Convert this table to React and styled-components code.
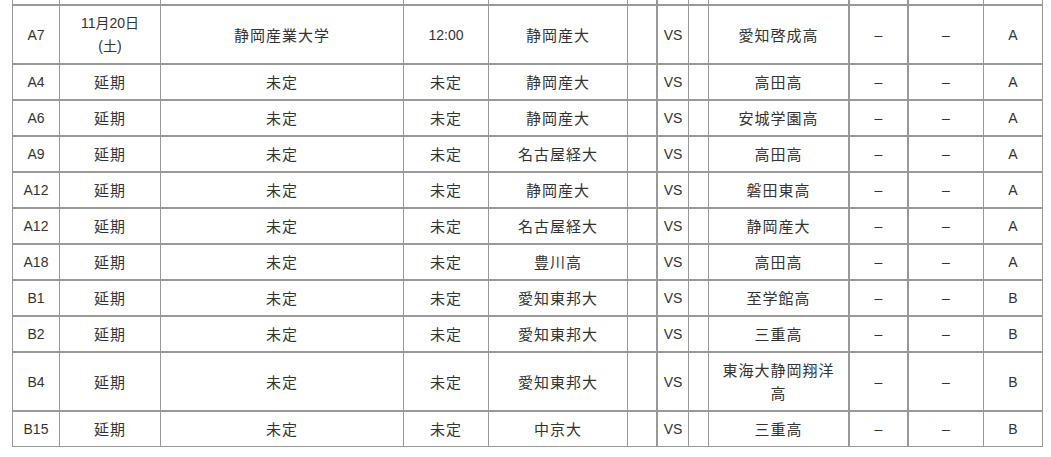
import React from "react";
import styled, { createGlobalStyle } from "styled-components";

const GlobalStyle = createGlobalStyle`
  html, body {
    margin: 0;
    padding: 0;
    background: #fff;
    overflow: hidden;
  }
  body {
    font-family: "Liberation Sans", "Noto Sans CJK JP", sans-serif;
    color: #333;
  }
`;

// column widths measured border to border
const cols = [47, 101, 243, 85, 139, 29, 32, 20, 140, 59, 76, 59];
// columns whose left rule is drawn heavier
const heavyLeft = [6, 9, 10];

const matches = [
  { id: "A7", date: ["11月20日", "(土)"], venue: "静岡産業大学", time: "12:00", home: "静岡産大", away: "愛知啓成高", group: "A" },
  { id: "A4", date: "延期", venue: "未定", time: "未定", home: "静岡産大", away: "高田高", group: "A" },
  { id: "A6", date: "延期", venue: "未定", time: "未定", home: "静岡産大", away: "安城学園高", group: "A" },
  { id: "A9", date: "延期", venue: "未定", time: "未定", home: "名古屋経大", away: "高田高", group: "A" },
  { id: "A12", date: "延期", venue: "未定", time: "未定", home: "静岡産大", away: "磐田東高", group: "A" },
  { id: "A12", date: "延期", venue: "未定", time: "未定", home: "名古屋経大", away: "静岡産大", group: "A" },
  { id: "A18", date: "延期", venue: "未定", time: "未定", home: "豊川高", away: "高田高", group: "A" },
  { id: "B1", date: "延期", venue: "未定", time: "未定", home: "愛知東邦大", away: "至学館高", group: "B" },
  { id: "B2", date: "延期", venue: "未定", time: "未定", home: "愛知東邦大", away: "三重高", group: "B" },
  { id: "B4", date: "延期", venue: "未定", time: "未定", home: "愛知東邦大", away: "東海大静岡翔洋高", group: "B" },
  { id: "B15", date: "延期", venue: "未定", time: "未定", home: "中京大", away: "三重高", group: "B" },
];

const Wrapper = styled.div`
  padding: 0 9px 0 12px;
  margin-top: -32px;
`;

const Table = styled.table`
  width: 1030px;
  table-layout: fixed;
  border-collapse: separate;
  border-spacing: 0;
  border-right: 1px solid #999;
  border-bottom: 1px solid #999;
`;

const Cell = styled.td`
  border-top: 2px solid #999;
  border-left: ${(p) => (p.$heavy ? 2 : 1)}px solid #999;
  padding: 6px ${(p) => (p.$wide ? 8 : 1)}px 5px;
  text-align: center;
  vertical-align: middle;
  line-height: 23px;
  font-size: ${(p) => (p.$jp ? 15 : 14)}px;
  letter-spacing: ${(p) => (p.$jp ? 1 : 0)}px;
  word-break: break-all;
`;

const Line = styled.span`
  display: block;
`;

const App = () => {
  return (
    <>
      <GlobalStyle />
      <Wrapper>
        <Table>
          <colgroup>
            {cols.map((w, i) => (
              <col key={i} style={{ width: w }} />
            ))}
          </colgroup>
          <tbody>
            {/* tail of the row scrolled off above */}
            <tr>
              {cols.map((w, j) => (
                <Cell key={j} $heavy={heavyLeft.includes(j)}>
                  {"\u00a0"}
                </Cell>
              ))}
            </tr>
            {matches.map((m, i) => {
              const cells = [
                { v: m.id },
                { v: m.date, jp: !Array.isArray(m.date) },
                { v: m.venue, jp: true },
                { v: m.time, jp: m.time !== "12:00" },
                { v: m.home, jp: true },
                { v: "" },
                { v: "VS" },
                { v: "" },
                { v: m.away, jp: true, wide: true },
                { v: "–" },
                { v: "–" },
                { v: m.group },
              ];
              return (
                <tr key={i}>
                  {cells.map((c, j) => (
                    <Cell
                      key={j}
                      $jp={c.jp}
                      $wide={c.wide}
                      $heavy={heavyLeft.includes(j)}
                    >
                      {Array.isArray(c.v)
                        ? c.v.map((t) => <Line key={t}>{t}</Line>)
                        : c.v}
                    </Cell>
                  ))}
                </tr>
              );
            })}
          </tbody>
        </Table>
      </Wrapper>
    </>
  );
};

export default App;
